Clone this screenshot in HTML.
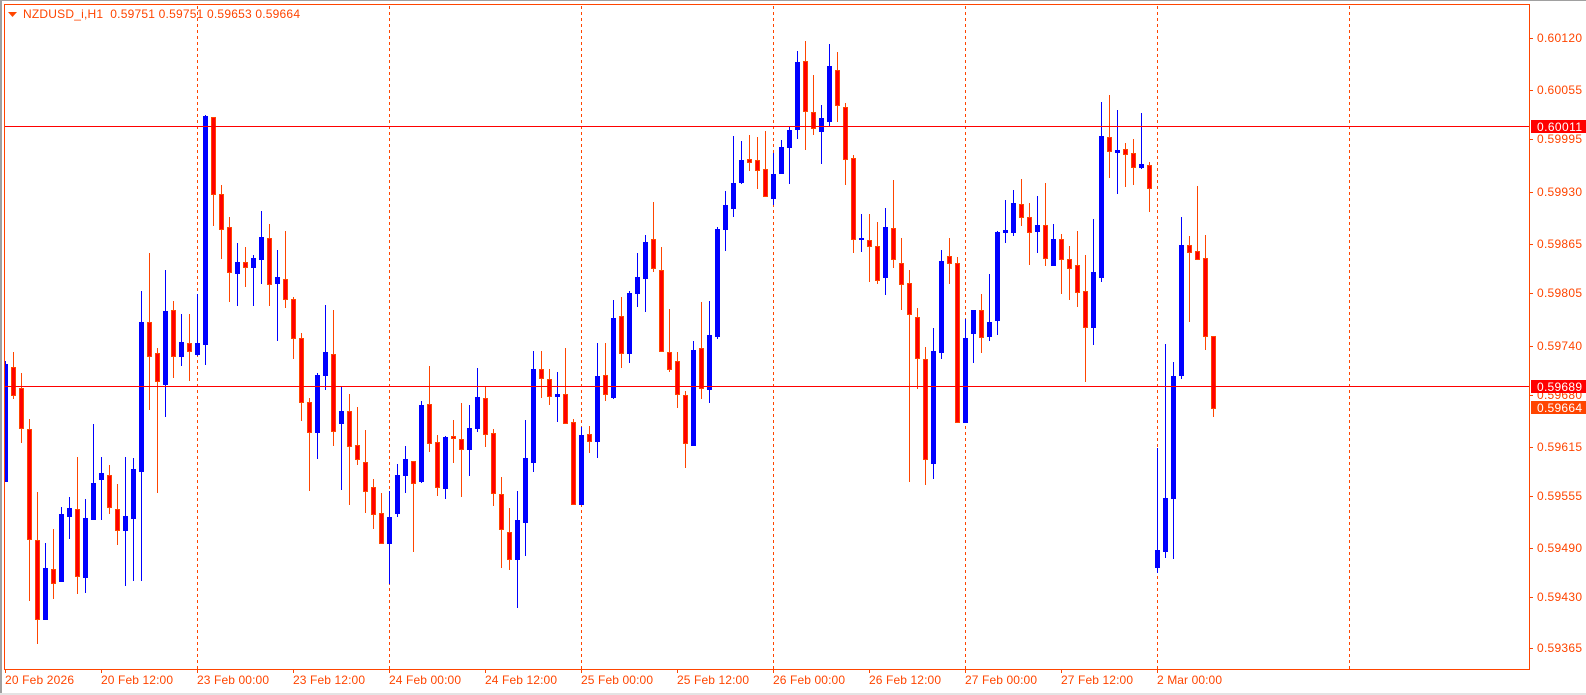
<!DOCTYPE html>
<html><head><meta charset="utf-8"><style>
html,body{margin:0;padding:0;background:#fff;}
svg{display:block;}
text{font-family:"Liberation Sans",Arial,sans-serif;font-size:12px;fill:#ff4500;}
</style></head><body>
<svg id="s" width="1586" height="695" xmlns="http://www.w3.org/2000/svg">
<defs><clipPath id="c"><rect x="5" y="5" width="1524" height="664"/></clipPath></defs>
<rect x="0" y="0" width="1586" height="695" fill="#fff"/>
<rect x="0" y="0" width="1586" height="1" fill="#a0a0a0"/>
<rect x="0" y="0" width="2" height="695" fill="#a0a0a0"/>
<rect x="0" y="693" width="1586" height="2" fill="#e4e4e4"/>
<g stroke="#ff4500" stroke-width="1" stroke-dasharray="3,3" shape-rendering="crispEdges">
<line x1="197.5" y1="6" x2="197.5" y2="669"/><line x1="389.5" y1="6" x2="389.5" y2="669"/>
<line x1="581.5" y1="6" x2="581.5" y2="669"/><line x1="773.5" y1="6" x2="773.5" y2="669"/>
<line x1="965.5" y1="6" x2="965.5" y2="669"/><line x1="1157.5" y1="6" x2="1157.5" y2="669"/>
<line x1="1349.5" y1="6" x2="1349.5" y2="669"/>
</g>
<g id="candles" clip-path="url(#c)" shape-rendering="crispEdges"></g>
<g shape-rendering="crispEdges">
<rect x="5" y="126" width="1524" height="1" fill="#ff0000"/>
<rect x="5" y="386" width="1524" height="1" fill="#ff0000"/>
<rect x="4.5" y="4.5" width="1525" height="665" fill="none" stroke="#ff4500" stroke-width="1"/>
</g>
<g fill="#ff4500" shape-rendering="crispEdges">
<rect x="1530" y="38" width="3" height="1"/><rect x="1530" y="90" width="3" height="1"/>
<rect x="1530" y="139" width="3" height="1"/><rect x="1530" y="192" width="3" height="1"/>
<rect x="1530" y="244" width="3" height="1"/><rect x="1530" y="293" width="3" height="1"/>
<rect x="1530" y="346" width="3" height="1"/><rect x="1530" y="395" width="3" height="1"/>
<rect x="1530" y="447" width="3" height="1"/><rect x="1530" y="496" width="3" height="1"/>
<rect x="1530" y="548" width="3" height="1"/><rect x="1530" y="597" width="3" height="1"/>
<rect x="1530" y="648" width="3" height="1"/>
<rect x="5" y="669" width="1" height="4"/><rect x="101" y="669" width="1" height="4"/>
<rect x="197" y="669" width="1" height="4"/><rect x="293" y="669" width="1" height="4"/>
<rect x="389" y="669" width="1" height="4"/><rect x="485" y="669" width="1" height="4"/>
<rect x="581" y="669" width="1" height="4"/><rect x="677" y="669" width="1" height="4"/>
<rect x="773" y="669" width="1" height="4"/><rect x="869" y="669" width="1" height="4"/>
<rect x="965" y="669" width="1" height="4"/><rect x="1061" y="669" width="1" height="4"/>
<rect x="1157" y="669" width="1" height="4"/>
</g>
<g>
<text x="1537" y="42" textLength="45">0.60120</text>
<text x="1537" y="94" textLength="45">0.60055</text>
<text x="1537" y="143" textLength="45">0.59995</text>
<text x="1537" y="196" textLength="45">0.59930</text>
<text x="1537" y="248" textLength="45">0.59865</text>
<text x="1537" y="297" textLength="45">0.59805</text>
<text x="1537" y="350" textLength="45">0.59740</text>
<text x="1537" y="399" textLength="45">0.59680</text>
<text x="1537" y="451" textLength="45">0.59615</text>
<text x="1537" y="500" textLength="45">0.59555</text>
<text x="1537" y="552" textLength="45">0.59490</text>
<text x="1537" y="601" textLength="45">0.59430</text>
<text x="1537" y="652" textLength="45">0.59365</text>
</g>
<rect x="1531" y="120" width="55" height="13" fill="#ff0000"/>
<text x="1537" y="131" textLength="45" style="fill:#fff">0.60011</text>
<rect x="1531" y="380" width="55" height="13" fill="#ff0000"/>
<text x="1537" y="391" textLength="45" style="fill:#fff">0.59689</text>
<rect x="1531" y="401" width="55" height="13" fill="#ff4500"/>
<text x="1537" y="412" textLength="45" style="fill:#fff">0.59664</text>
<g>
<text x="5" y="684" textLength="69">20 Feb 2026</text>
<text x="101" y="684" textLength="72">20 Feb 12:00</text>
<text x="197" y="684" textLength="72">23 Feb 00:00</text>
<text x="293" y="684" textLength="72">23 Feb 12:00</text>
<text x="389" y="684" textLength="72">24 Feb 00:00</text>
<text x="485" y="684" textLength="72">24 Feb 12:00</text>
<text x="581" y="684" textLength="72">25 Feb 00:00</text>
<text x="677" y="684" textLength="72">25 Feb 12:00</text>
<text x="773" y="684" textLength="72">26 Feb 00:00</text>
<text x="869" y="684" textLength="72">26 Feb 12:00</text>
<text x="965" y="684" textLength="72">27 Feb 00:00</text>
<text x="1061" y="684" textLength="72">27 Feb 12:00</text>
<text x="1157" y="684" textLength="65">2 Mar 00:00</text>
</g>
<polygon points="8,12 17,12 12.5,17" fill="#ff4500"/>
<text x="23" y="18" textLength="277" xml:space="preserve">NZDUSD_i,H1  0.59751 0.59751 0.59653 0.59664</text>
</svg>
<script>
(function(){
var z4=[
['b',752,760,1095,1095],['r',725,768,850,858],['r',785,830,942,983],['r',918,945,1262,1435],['r',1128,1263,1492,1560],
['b',1272,1345,1492,1492],['r',1234,1347,1388,1432],['b',1170,1190,1383,1383],['b',1142,1174,1196,1260],['r',1027,1175,1368,1415],
['b',1148,1200,1370,1412],['b',932,1100,1203,1205],['b',1027,1073,1090,1205],['r',1050,1077,1170,1188],['r',1105,1175,1236,1275],
['b',1027,1197,1236,1392],['b',1030,1060,1202,1380],['b',550,640,1066,1378],['r',443,640,738,888],['r',714,728,810,1127],
['b',492,607,817,908],['r',578,604,738,797],['b',616,696,738,762],['r',616,700,724,805],['b',560,700,730,733],
['b',45,48,702,760],['r',52,52,272,362],['r',248,273,373,455],['r',338,368,497,578],['b',413,469,500,592],
['r',426,469,482,535],['b',447,457,482,592],['b',322,397,460,527],['r',360,400,530,592],['b',434,512,528,692],
['r',380,515,574,598],['r',567,573,685,742]];
var z5=[
['r',700,714,905,960],['r',893,907,997,1170],['b',820,825,995,1073],['b',615,757,825,867],['r',630,763,992,1035],
['b',857,933,968,1167],['r',882,934,1037,1212],['r',920,1036,1078,1092],['r',990,1087,1172,1235],['r',1137,1162,1243,1283],
['r',1180,1240,1328,1328],['b',1172,1251,1328,1450],['b',1092,1125,1238,1248],['b',1038,1078,1125,1175],['r',1083,1083,1150,1352],
['b',903,915,1142,1145],['r',798,912,1030,1052],['r',1005,1026,1162,1185],['b',1008,1012,1165,1193],['r',960,1008,1013,1085],
['r',908,1018,1048,1188],['b',915,985,1048,1125],['b',804,891,983,993],['r',858,895,1003,1037],['r',988,1000,1180,1215],
['r',1132,1183,1288,1400],['r',1225,1295,1378,1408],['b',1173,1260,1378,1520],['b',960,1075,1265,1365],['b',752,808,1085,1112],
['r',752,808,835,890],['r',808,838,888,913],['b',817,883,887,962],['r',745,883,970,970],['r',958,967,1213,1213],
['b',982,1005,1213,1213],['r',978,1003,1022,1055]];
var z6=[
['b',940,1038,1232,1280],['r',940,1036,1093,1110],['b',810,865,1100,1105],['r',800,858,970,1012],['b',783,790,968,995],
['b',668,742,790,827],['b',615,636,745,842],['r',516,628,713,722],['r',652,720,962,962],['r',837,967,1018,1022],
['r',966,994,1093,1130],['r',1082,1096,1240,1312],['b',933,960,1245,1245],['r',816,955,1075,1103],['b',813,915,1078,1117],
['b',590,597,917,925],['b',483,525,598,660],['b',318,460,533,557],['b',332,390,457,458],['r',315,388,395,420],
['r',322,391,421,473],['r',303,417,497,497],['b',370,432,503,523],['b',330,352,428,428],['b',292,300,350,458],
['b',63,97,298,323],['r',33,94,243,358],['r',135,247,295,313],['b',225,265,302,398],['b',42,108,272,288],
['r',66,121,226,272],['r',219,232,388,462],['r',375,385,628,665],['b',552,625,628,662],['r',552,631,648,752],
['r',576,648,751,760],['b',534,592,740,793],['r',450,595,688,710]];
var z7=[
['r',473,550,613,687],['r',570,610,703,1202],['r',685,710,835,925],['r',800,838,1138,1212],['b',745,813,1148,1195],
['b',510,543,815,835],['r',473,528,548,610],['r',530,550,1025,1025],['b',716,773,1025,1025],['b',690,690,758,845],
['r',642,690,770,815],['b',582,727,768,780],['b',453,457,720,762],['b',360,450,455,485],['b',330,370,455,465],
['r',297,373,410,435],['r',370,411,455,552],['b',348,435,452,515],['r',310,436,535,555],['b',432,478,555,555],
['r',462,478,538,638],['r',498,538,565,657],['r',453,556,635,678],['r',525,633,742,902],['b',417,577,740,792],
['b',66,168,590,603],['r',45,170,213,290],['b',90,210,217,338],['r',188,208,223,318],['r',177,220,262,312],
['b',98,253,260,263],['r',245,256,323,392],['b',1105,1410,1462,1475],['b',792,1253,1412,1430],['b',846,888,1255,1435]];
var z8=[['b',201,285,675,683],['r',258,286,305,513],['r',108,303,328,328],['r',255,325,557,597],['r',558,558,773,798]];
var all=[];
function add(arr,f){arr.forEach(function(c){all.push([c[0],f(c[1]),f(c[2]),f(c[3]),f(c[4])]);});}
add(z4,function(Y){return 125+(Y-75)/2.866;});
add(z5,function(Y){return 100+Y/3;});
add(z6,function(Y){return 30+Y/3;});
add(z7,function(Y){return 80+Y/3;});
add(z8,function(Y){return 150+Y/3;});
var g=document.getElementById('candles'),h='';
all.forEach(function(c,i){
  var L=3+8*i, wt=Math.round(c[1]), bt=Math.round(c[2]), bb=Math.round(c[3]), wb=Math.round(c[4]);
  if(bb-bt<1)bb=bt+1; if(wb<bb)wb=bb; if(wt>bt)wt=bt;
  if(c[0]=='b'){
    h+='<rect x="'+(L+2)+'" y="'+wt+'" width="1" height="'+(wb-wt+1)+'" fill="#0000ff"/>';
    h+='<rect x="'+L+'" y="'+bt+'" width="5" height="'+(bb-bt+1)+'" fill="#0000ff"/>';
  }else{
    h+='<rect x="'+(L+2)+'" y="'+wt+'" width="1" height="'+(wb-wt+1)+'" fill="#ff4500"/>';
    h+='<rect x="'+L+'" y="'+bt+'" width="5" height="'+(bb-bt+1)+'" fill="#ff4500"/>';
    if(bb-bt>=2)h+='<rect x="'+(L+1)+'" y="'+(bt+1)+'" width="3" height="'+(bb-bt-1)+'" fill="#ff0000"/>';
  }
});
g.innerHTML=h;
})();
</script>
</body></html>
